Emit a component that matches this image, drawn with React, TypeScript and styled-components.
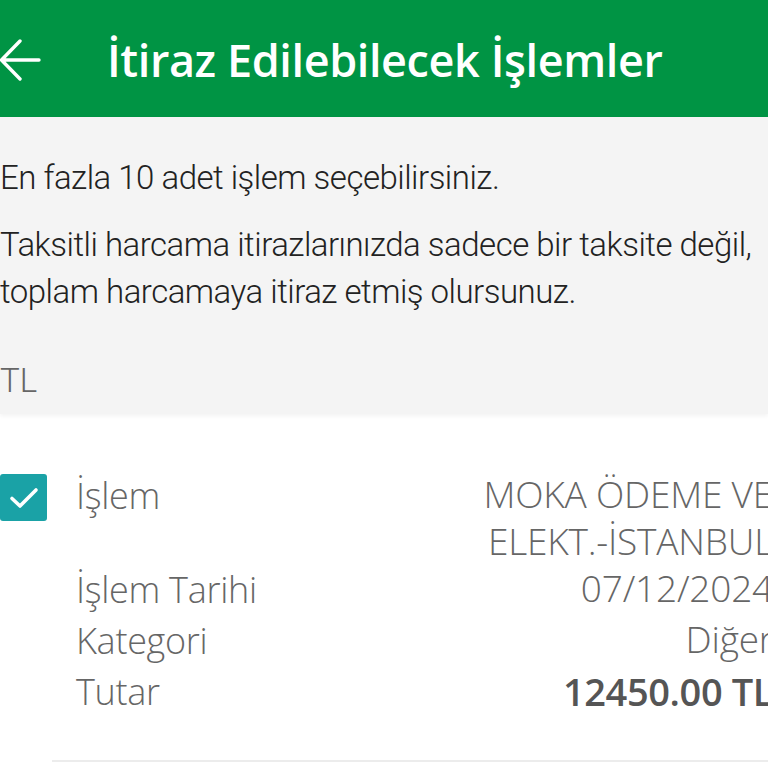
import { FunctionComponent } from 'react';
import styled, { createGlobalStyle } from 'styled-components';

const GlobalStyle = createGlobalStyle`
  html, body {
    margin: 0;
    padding: 0;
    background: #ffffff;
    overflow: hidden;
  }
  body {
    font-family: Roboto, 'Noto Sans', sans-serif;
  }
`;

const Page = styled.div`
  width: 768px;
  min-height: 768px;
  display: flex;
  flex-direction: column;
  background: #ffffff;
`;

const Header = styled.header`
  height: 117px;
  background: #009444;
  display: flex;
  flex-direction: row;
  align-items: center;
  gap: 0 66px;
  box-sizing: border-box;
  padding-top: 2px;
`;

const BackButton = styled.button`
  width: 41px;
  height: 44px;
  padding: 0;
  margin: 0;
  border: 0;
  background: transparent;
  display: flex;
  align-items: center;
  justify-content: flex-start;
  cursor: pointer;
`;

const Title = styled.h1`
  margin: 0;
  color: #ffffff;
  font-family: 'Open Sans', 'Noto Sans', sans-serif;
  font-weight: 600;
  font-size: 45px;
  letter-spacing: -0.4px;
`;

const InfoSection = styled.section`
  background: #f4f4f4;
  padding: 37px 0 10px 0;
  display: flex;
  flex-direction: column;
  box-shadow: 0 2px 4px rgba(0, 0, 0, 0.05);
`;

const InfoText = styled.p<{ $gap?: number }>`
  margin: 0 0 ${(p) => p.$gap ?? 0}px 0;
  color: #222222;
  font-family: 'Roboto', sans-serif;
  font-weight: 300;
  font-size: 33px;
  line-height: 47px;
  letter-spacing: -0.5px;
`;

const Currency = styled.div`
  color: #666666;
  font-family: 'Roboto', sans-serif;
  font-weight: 300;
  font-size: 33px;
  line-height: 47px;
`;

const Card = styled.div`
  display: flex;
  flex-direction: row;
  align-items: flex-start;
  padding: 60px 0 0 0;
  margin-right: -5px;
  gap: 0 29px;
`;

const Check = styled.div`
  flex: none;
  width: 47px;
  height: 47px;
  border-radius: 3px;
  background: #1aa2a6;
  display: flex;
  align-items: center;
  justify-content: center;
`;

const Details = styled.dl`
  flex: 1;
  margin: -4px 0 0 0;
  display: grid;
  grid-template-columns: auto 1fr;
  column-gap: 24px;
`;

const Label = styled.dt`
  margin: 0;
  color: #666666;
  font-family: 'Open Sans', sans-serif;
  font-weight: 300;
  font-size: 36px;
  line-height: 51px;
  letter-spacing: -0.3px;
`;

const Value = styled.dd<{ $bold?: boolean }>`
  margin: 0;
  text-align: right;
  color: ${(p) => (p.$bold ? '#555555' : '#666666')};
  font-family: 'Open Sans', sans-serif;
  font-weight: ${(p) => (p.$bold ? 600 : 300)};
  font-size: ${(p) => (p.$bold ? '38px' : '37px')};
  line-height: ${(p) => (p.$bold ? '51px' : '47px')};
  letter-spacing: ${(p) => (p.$bold ? '-0.4px' : '-0.2px')};
`;

const Divider = styled.hr`
  margin: 43px 0 0 52px;
  border: 0;
  border-top: 2px solid #ececec;
`;

const ArrowIcon = () => (
  <svg width="41" height="44" viewBox="0 0 41 44" fill="none">
    <path
      d="M39 22 H2 M20 3 L1.5 22 L20 41"
      stroke="#ffffff"
      strokeWidth="3.4"
      strokeLinecap="round"
      strokeLinejoin="round"
    />
  </svg>
);

const CheckIcon = () => (
  <svg width="30" height="24" viewBox="0 0 30 24" fill="none">
    <path
      d="M3 12.5 L11 20 L27 4"
      stroke="#ffffff"
      strokeWidth="3.6"
      strokeLinecap="round"
      strokeLinejoin="round"
    />
  </svg>
);

const App: FunctionComponent = () => {
  return (
    <Page>
      <GlobalStyle />
      <Header>
        <BackButton aria-label="Geri">
          <ArrowIcon />
        </BackButton>
        <Title>İtiraz Edilebilecek İşlemler</Title>
      </Header>
      <InfoSection>
        <InfoText $gap={20}>En fazla 10 adet işlem seçebilirsiniz.</InfoText>
        <InfoText $gap={42}>
          Taksitli harcama itirazlarınızda sadece bir taksite değil,
          <br />
          toplam harcamaya itiraz etmiş olursunuz.
        </InfoText>
        <Currency>TL</Currency>
      </InfoSection>
      <Card>
        <Check>
          <CheckIcon />
        </Check>
        <Details>
          <Label>İşlem</Label>
          <Value>
            MOKA ÖDEME VE
            <br />
            ELEKT.-İSTANBUL
          </Value>
          <Label>İşlem Tarihi</Label>
          <Value>07/12/2024</Value>
          <Label>Kategori</Label>
          <Value>Diğer</Value>
          <Label>Tutar</Label>
          <Value $bold>12450.00 TL</Value>
        </Details>
      </Card>
      <Divider />
    </Page>
  );
};

export default App;
